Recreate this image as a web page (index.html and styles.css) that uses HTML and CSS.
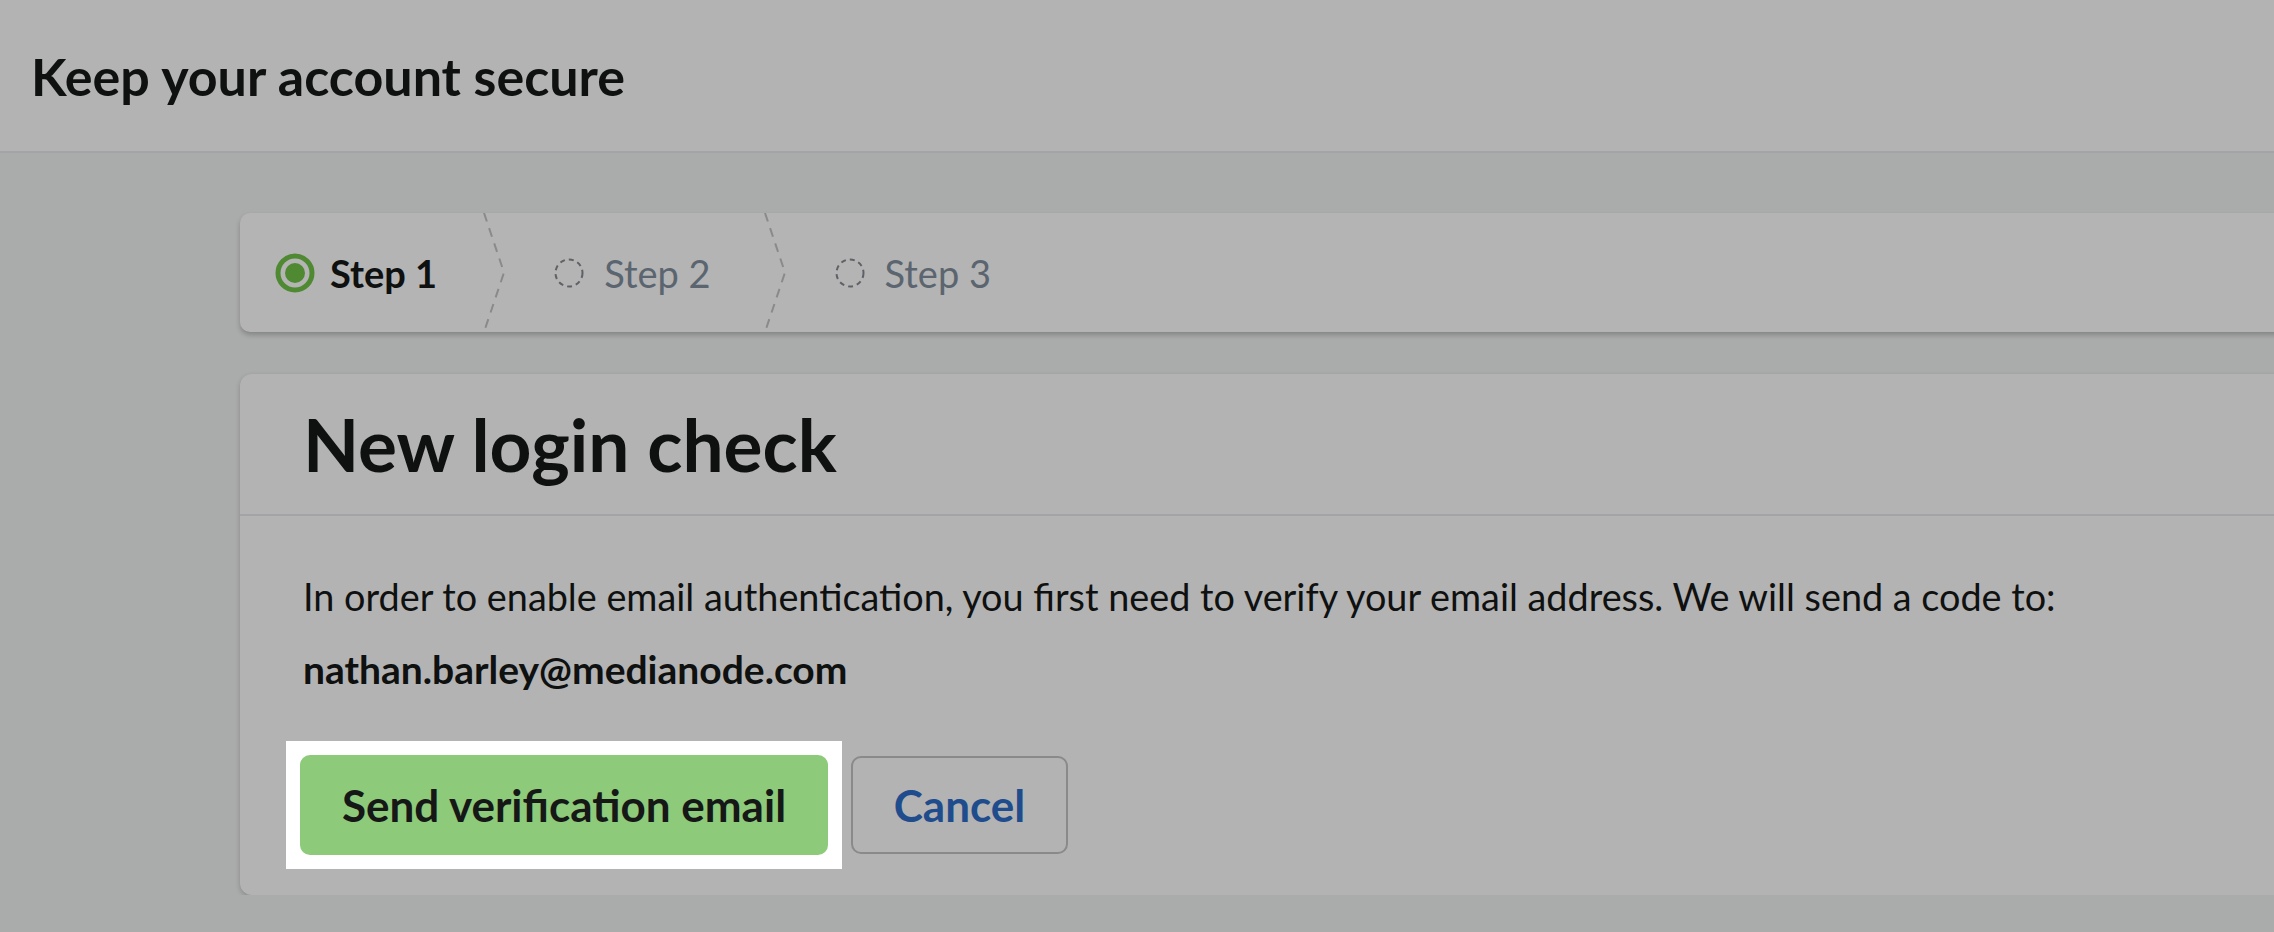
FILE: index.html
```html
<!DOCTYPE html>
<html lang="en">
<head>
    <meta charset="UTF-8">
    <meta name="viewport" content="width=device-width, initial-scale=1.0">
    <title>Keep your account secure</title>
    <link rel="stylesheet" href="styles.css">
</head>
<body>
    <header class="page-header">
        <h1>Keep your account secure</h1>
    </header>
    <main class="content">
        <ol class="steps">
            <li class="step step-current">
                <svg class="step-icon" width="40" height="40" viewBox="0 0 40 40">
                    <circle cx="20" cy="20" r="17" fill="none" stroke="#4f8a33" stroke-width="5"/>
                    <circle cx="20" cy="20" r="10" fill="#4f8a33"/>
                </svg>
                <span>Step 1</span>
            </li>
            <li class="step-sep">
                <svg width="22" height="119" viewBox="0 0 22 119">
                    <polyline points="1,0 21,59.5 1,119" fill="none" stroke="#8a8a8a" stroke-width="2" stroke-dasharray="9 7"/>
                </svg>
            </li>
            <li class="step">
                <svg class="step-icon" width="40" height="40" viewBox="0 0 40 40">
                    <circle cx="20" cy="20" r="13.5" fill="none" stroke="#5e6166" stroke-width="2" stroke-dasharray="5 4"/>
                </svg>
                <span>Step 2</span>
            </li>
            <li class="step-sep">
                <svg width="22" height="119" viewBox="0 0 22 119">
                    <polyline points="1,0 21,59.5 1,119" fill="none" stroke="#8a8a8a" stroke-width="2" stroke-dasharray="9 7"/>
                </svg>
            </li>
            <li class="step">
                <svg class="step-icon" width="40" height="40" viewBox="0 0 40 40">
                    <circle cx="20" cy="20" r="13.5" fill="none" stroke="#5e6166" stroke-width="2" stroke-dasharray="5 4"/>
                </svg>
                <span>Step 3</span>
            </li>
        </ol>

        <section class="card">
            <div class="card-header">
                <h2>New login check</h2>
            </div>
            <div class="card-body">
                <p>In order to enable email authentication, you first need to verify your email address. We will send a code to:</p>
                <p class="email">nathan.barley@medianode.com</p>
                <div class="actions">
                    <span class="focus-ring">
                        <button class="btn btn-primary">Send verification email</button>
                    </span>
                    <button class="btn btn-secondary">Cancel</button>
                </div>
            </div>
        </section>
    </main>
</body>
</html>
```

FILE: styles.css
```css
body {
    margin: 0;
    padding: 0;
    background-color: #aaabab;
    font-family: Lato, "Noto Sans", sans-serif;
    color: #0f1010;
    overflow: hidden;
}

.page-header {
    height: 151px;
    display: flex;
    align-items: center;
    padding-left: 31px;
    background-color: #b3b3b3;
    border-bottom: 2px solid #a4a4a8;
}

.page-header h1 {
    margin: 0;
    font-size: 52px;
    font-weight: 700;
}

.content {
    padding: 60px 0 0 240px;
    width: 2100px;
}

.steps {
    list-style: none;
    margin: 0;
    padding: 0;
    height: 119px;
    display: flex;
    background-color: #b4b4b4;
    border-radius: 10px;
    box-shadow: 0 3px 5px rgba(0, 0, 0, 0.22);
}

.step {
    display: flex;
    align-items: center;
    gap: 15px;
    padding: 0 53px 0 44px;
    font-size: 38px;
    color: #5b6570;
}

.step-current {
    padding: 0 46px 0 35px;
    font-weight: 700;
    color: #0f1010;
}

.step-sep {
    display: flex;
}

.card {
    margin-top: 42px;
    background-color: #b3b3b3;
    border-radius: 12px;
    box-shadow: 0 2px 5px rgba(0, 0, 0, 0.2);
}

.card-header {
    height: 140px;
    display: flex;
    align-items: center;
    padding-left: 63px;
    border-bottom: 2px solid #a4a4a8;
}

.card-header h2 {
    margin: 0;
    font-size: 73px;
    font-weight: 700;
}

.card-body {
    padding: 55px 0 26px 63px;
}

.card-body p {
    margin: 0 0 20px;
    font-size: 37.8px;
    line-height: 52px;
}

.card-body .email {
    font-size: 39px;
    font-weight: 700;
    margin-bottom: 46px;
}

.actions {
    display: flex;
    align-items: center;
    gap: 9px;
    margin-left: -17px;
}

.focus-ring {
    display: inline-block;
    padding: 14px;
    background-color: #fff;
}

.btn {
    height: 100px;
    border-radius: 10px;
    font-family: inherit;
    font-size: 44px;
    cursor: pointer;
}

.btn-primary {
    display: block;
    width: 528px;
    border: none;
    background-color: #8dca7a;
    color: #161817;
    font-weight: 700;
}

.btn-secondary {
    width: 217px;
    height: 98px;
    border: 2px solid #8a8a8a;
    background-color: transparent;
    color: #1f4c8c;
    font-weight: 700;
}
```
